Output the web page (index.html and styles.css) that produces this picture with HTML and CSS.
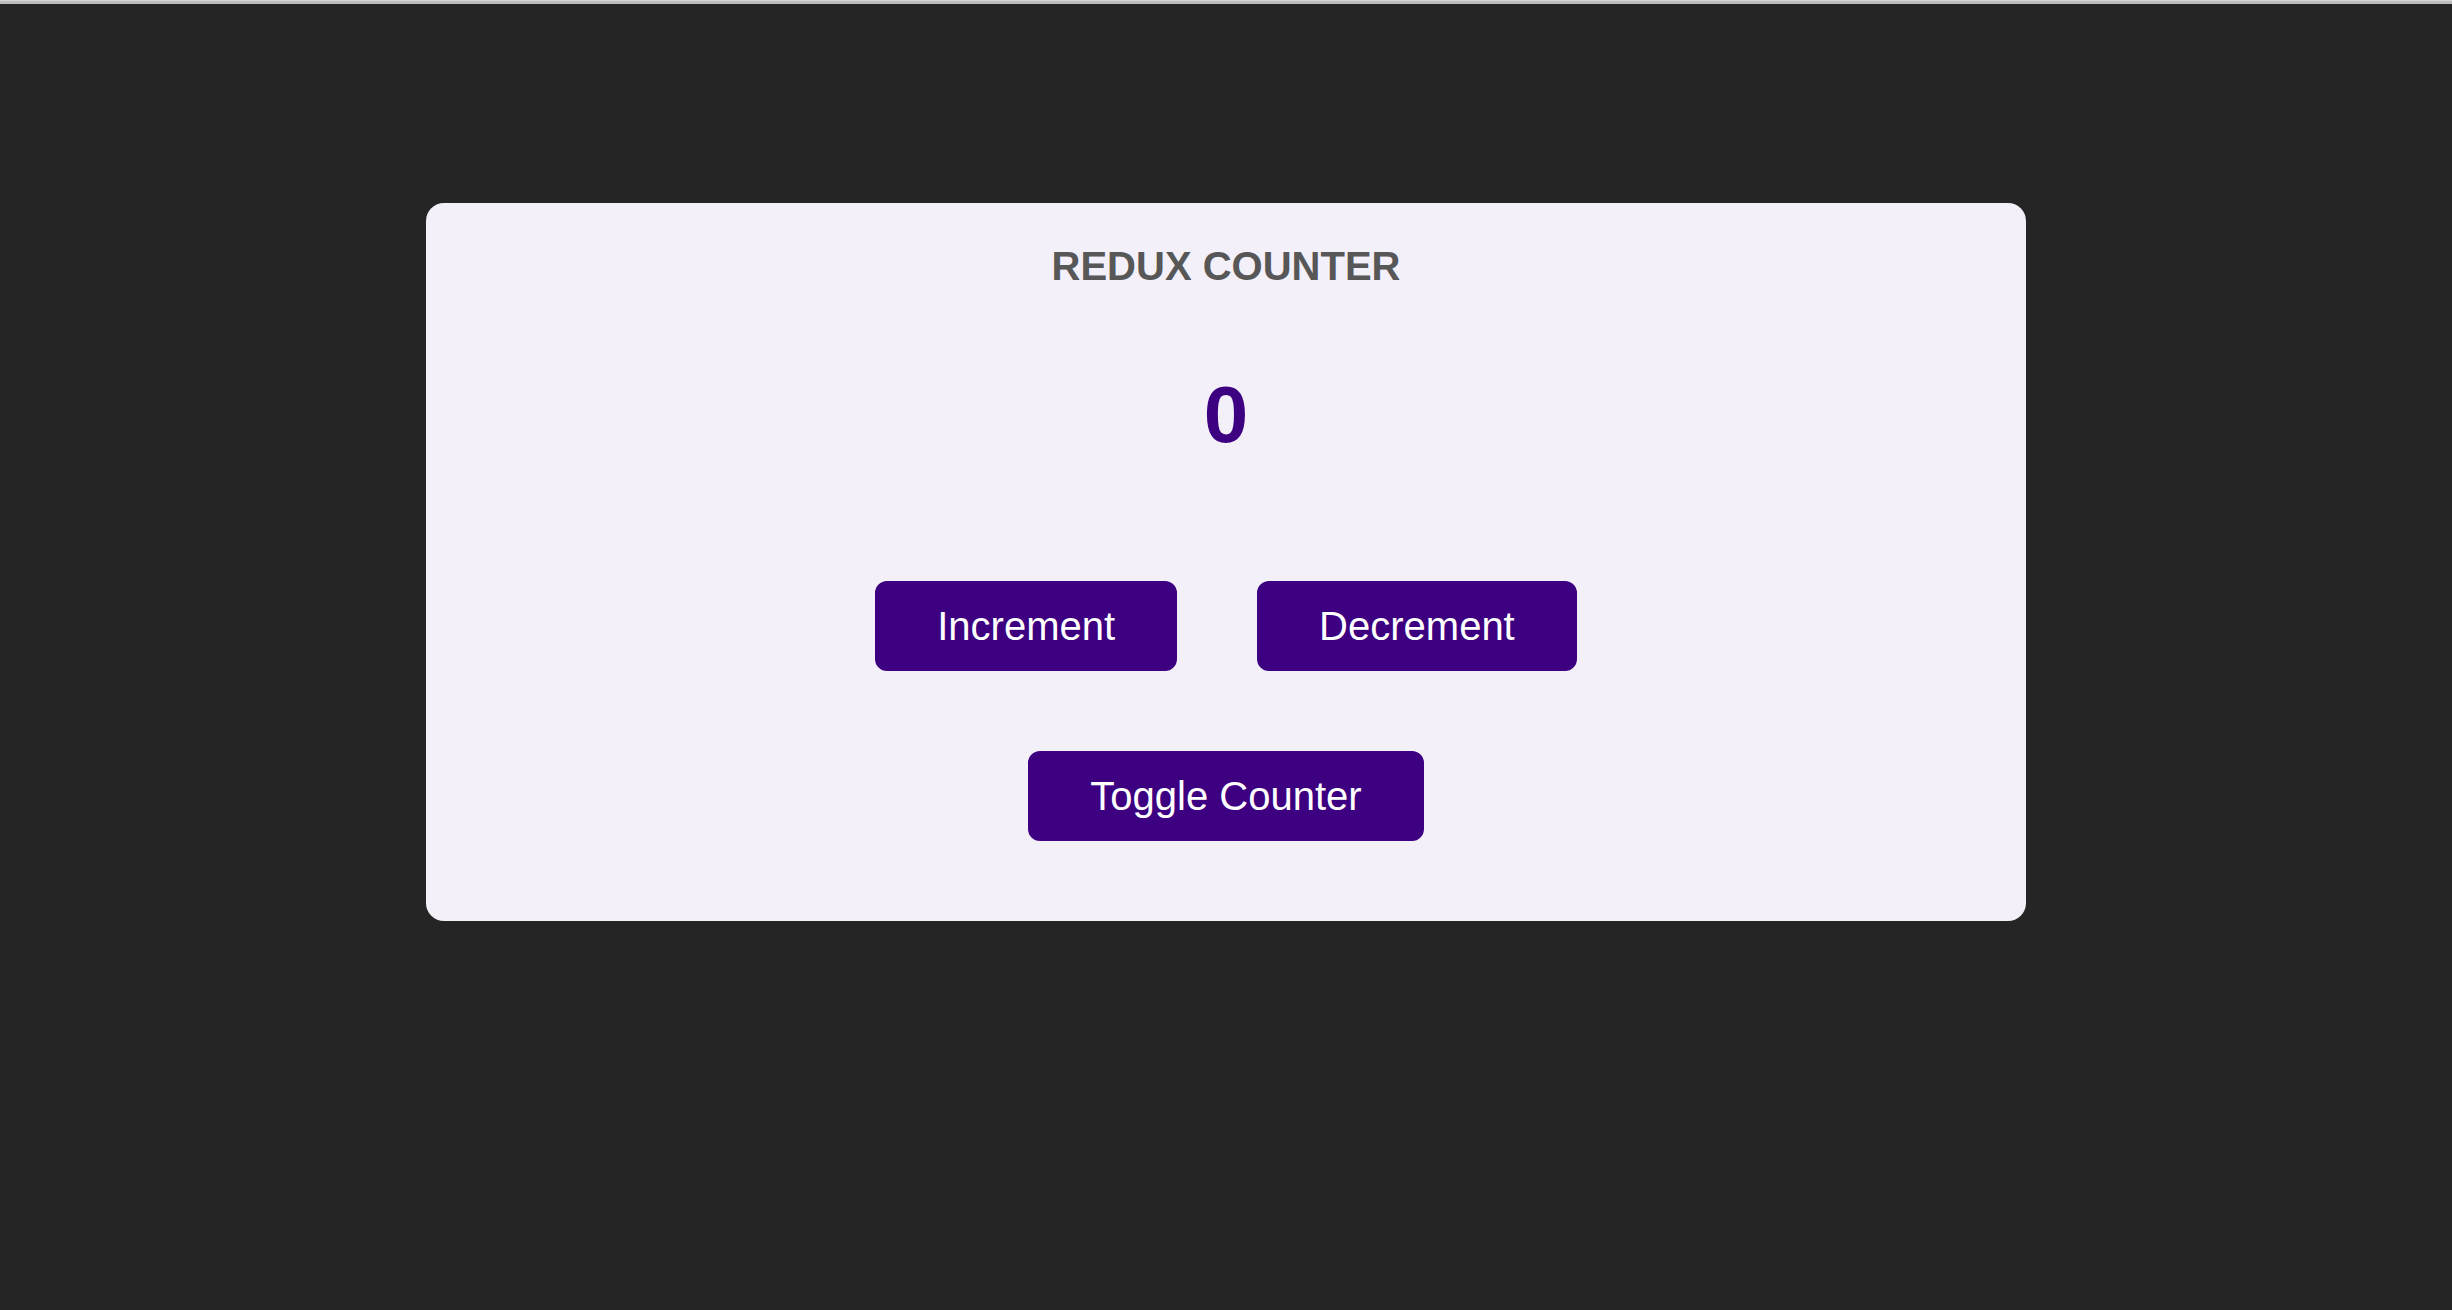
FILE: index.html
```html
<!DOCTYPE html>
<html lang="en">
<head>
<meta charset="utf-8">
<title>Redux Counter</title>
<link rel="stylesheet" href="styles.css">
</head>
<body>
<div class="topbar"></div>
<main class="counter">
  <h1 class="title">Redux Counter</h1>
  <div class="value">0</div>
  <div class="actions">
    <button class="btn">Increment</button>
    <button class="btn">Decrement</button>
  </div>
  <div class="toggle-row">
    <button class="btn">Toggle Counter</button>
  </div>
</main>
</body>
</html>
```

FILE: styles.css
```css
html, body {
  margin: 0;
  padding: 0;
}

body {
  background: #252525;
  font-family: "Liberation Sans", Arial, sans-serif;
  min-height: 1310px;
}

.topbar {
  height: 3px;
  border-top: 1px solid #d6d6d6;
  background: #bbbbbb;
}

.counter {
  width: 1600px;
  box-sizing: border-box;
  margin: 199px auto 0;
  padding: 40px 40px 80px;
  background: #f4f0fa;
  border-radius: 18px;
  text-align: center;
}

.title {
  margin: 0;
  font-size: 40px;
  line-height: 46px;
  font-weight: bold;
  text-transform: uppercase;
  color: #575757;
}

.value {
  margin-top: 80px;
  font-size: 80px;
  line-height: 92px;
  font-weight: bold;
  color: #3c0080;
}

.actions {
  margin-top: 120px;
  display: flex;
  justify-content: center;
  gap: 80px;
}

.toggle-row {
  margin-top: 80px;
  display: flex;
  justify-content: center;
}

.btn {
  font-family: "Liberation Sans", Arial, sans-serif;
  font-size: 40px;
  line-height: 46px;
  color: #ffffff;
  background: #3c0080;
  border: 2px solid #3c0080;
  border-radius: 12px;
  padding: 20px 60px;
  cursor: pointer;
}
```
